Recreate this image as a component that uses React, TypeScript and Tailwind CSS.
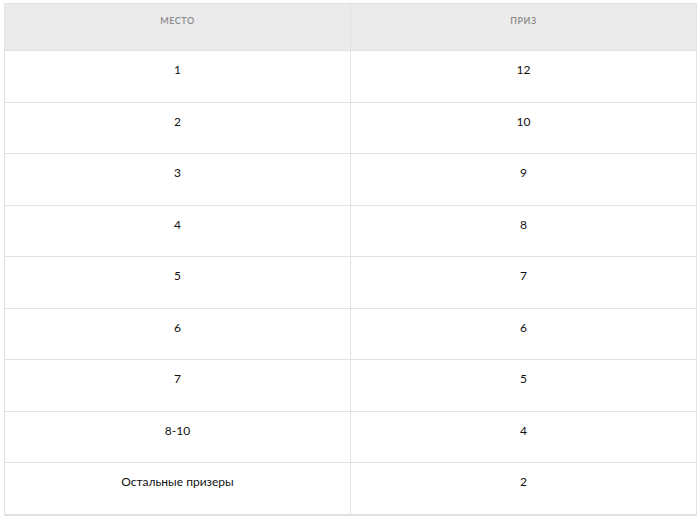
import React from "react";

const rows: [string, string][] = [
  ["1", "12"],
  ["2", "10"],
  ["3", "9"],
  ["4", "8"],
  ["5", "7"],
  ["6", "6"],
  ["7", "5"],
  ["8-10", "4"],
  ["Остальные призеры", "2"],
];

export default function App() {
  return (
    <div className="w-[700px] h-[519px] bg-white pt-[3px] pl-[4px]" style={{ fontFamily: "Lato, 'Open Sans', sans-serif" }}>
      <div className="w-[693px] border border-[#e2e2e2] border-b-2">
        <div className="grid grid-cols-[346px_1fr] h-[46px] bg-[#ebebeb]">
          <div className="border-r border-[#e2e2e2] flex justify-center pt-[10px] text-[9px] tracking-[0.06em] text-[#8a8a8a] font-semibold">МЕСТО</div>
          <div className="flex justify-center pt-[10px] text-[9px] tracking-[0.06em] text-[#8a8a8a] font-semibold">ПРИЗ</div>
        </div>
        {rows.map(([a, b], i) => (
          <div key={i} className="grid grid-cols-[346px_1fr] h-[51.5px] border-t border-[#e2e2e2] text-[12px] text-[#111]">
            <div className="border-r border-[#e2e2e2] flex justify-center pt-[10px]">{a}</div>
            <div className="flex justify-center pt-[10px]">{b}</div>
          </div>
        ))}
      </div>
    </div>
  );
}
